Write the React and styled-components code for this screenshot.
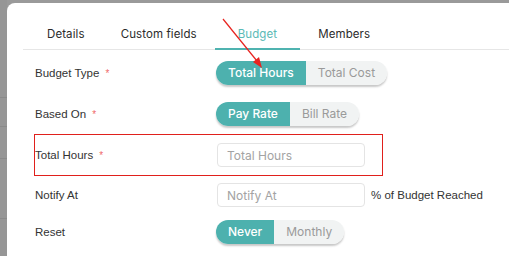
import React from 'react';
import styled, { createGlobalStyle } from 'styled-components';

const GlobalStyle = createGlobalStyle`
  html, body {
    margin: 0;
    padding: 0;
    width: 509px;
    height: 256px;
    overflow: hidden;
    background: #999;
  }
  * { box-sizing: border-box; }
`;

const tabs = ['Details', 'Custom fields', 'Budget', 'Members'];

const rows = [
  { label: 'Budget Type', required: true, h: 41, options: ['Total Hours', 'Total Cost'] },
  { label: 'Based On', required: true, h: 41, options: ['Pay Rate', 'Bill Rate'] },
  { label: 'Total Hours', required: true, h: 42, input: 'Total Hours', marked: true },
  { label: 'Notify At', h: 38, input: 'Notify At', suffix: '% of Budget Reached' },
  { label: 'Reset', h: 35, options: ['Never', 'Monthly'] },
];

const App = () => {
  return (
    <>
      <GlobalStyle />
      <Page>
        <Backdrop>
          <Stripe $top={97} />
          <Stripe $top={126} />
          <Stripe $top={158} />
          <Stripe $top={218} />
        </Backdrop>
        <Modal>
          <TabBar>
            {tabs.map((t) => (
              <Tab key={t} $active={t === 'Budget'}>
                {t}
              </Tab>
            ))}
          </TabBar>
          <Form>
            {rows.map((r) => (
              <Row key={r.label} $h={r.h} $marked={r.marked}>
                <Label>
                  {r.label}
                  {r.required && <Star>*</Star>}
                </Label>
                {r.options && (
                  <Toggle>
                    {r.options.map((o, i) => (
                      <Segment key={o} $on={i === 0}>
                        {o}
                      </Segment>
                    ))}
                  </Toggle>
                )}
                {r.input && <Input placeholder={r.input} />}
                {r.suffix && <Suffix>{r.suffix}</Suffix>}
              </Row>
            ))}
          </Form>
        </Modal>
        <Arrow width="509" height="256" viewBox="0 0 509 256">
          <line x1="223" y1="19" x2="257" y2="61" stroke="#e8231f" strokeWidth="1.2" />
          <polygon points="262,68 253,62 259,57" fill="#e8231f" />
        </Arrow>
      </Page>
    </>
  );
};

export default App;

const Page = styled.div`
  position: relative;
  width: 509px;
  height: 256px;
  padding: 3px 0 0 7px;
  background: #9a9a9a;
  overflow: hidden;
`;

const Backdrop = styled.div`
  position: absolute;
  left: 0;
  top: 0;
  width: 7px;
  height: 256px;
  background: #969696;
`;

const Stripe = styled.div`
  position: absolute;
  left: 0;
  top: ${(p) => p.$top}px;
  width: 7px;
  height: 1px;
  background: #8a8a8a;
`;

const Modal = styled.div`
  width: 540px;
  height: 280px;
  background: #fff;
  border-top-left-radius: 8px;
  padding: 15px 0 0 16px;
`;

const TabBar = styled.div`
  display: flex;
  height: 32px;
  border-bottom: 1px solid #e6e6e6;
  padding-left: 6px;
`;

const Tab = styled.div`
  display: flex;
  align-items: center;
  justify-content: center;
  padding: 2px ${(p) => (p.$active ? 23 : 18)}px 0;
  height: 32px;
  margin-bottom: -1px;
  font-family: Inter, 'Noto Sans', sans-serif;
  font-size: 11.5px;
  color: ${(p) => (p.$active ? '#5bbab6' : '#2b2b2b')};
  border-bottom: 2px solid ${(p) => (p.$active ? '#4fb3b0' : 'transparent')};
  letter-spacing: 0.1px;
`;

const Form = styled.div`
  display: flex;
  flex-direction: column;
  padding: 2px 0 0 12px;
`;

const Row = styled.div`
  display: flex;
  align-items: center;
  height: ${(p) => p.$h}px;
  width: ${(p) => (p.$marked ? '349px' : 'auto')};
  margin-left: ${(p) => (p.$marked ? '-1px' : '0')};
  border: ${(p) => (p.$marked ? '1px solid #e0201c' : 'none')};
`;

const Label = styled.div`
  width: 181px;
  font-family: 'Liberation Sans', Arial, sans-serif;
  font-size: 11.5px;
  color: #333;
`;

const Star = styled.span`
  color: #f06a6a;
  margin-left: 6px;
  font-size: 10px;
`;

const Toggle = styled.div`
  display: flex;
  height: 24px;
  border-radius: 12px;
  overflow: hidden;
  box-shadow: 0 2px 2px rgba(0, 0, 0, 0.22);
`;

const Segment = styled.div`
  display: flex;
  align-items: center;
  padding: 0 12px;
  font-family: Inter, 'Noto Sans', sans-serif;
  font-size: 12px;
  font-weight: ${(p) => (p.$on ? 500 : 400)};
  color: ${(p) => (p.$on ? '#fff' : '#9a9a9a')};
  background: ${(p) => (p.$on ? '#4db1ae' : '#f1f3f3')};
`;

const Input = styled.input`
  width: 148px;
  height: 24px;
  border: 1px solid #e4e4e4;
  border-radius: 4px;
  padding: 0 9px;
  font-family: Inter, 'Noto Sans', sans-serif;
  font-size: 12px;
  outline: none;
  margin-left: 1px;
  &::placeholder {
    color: #a3a3a3;
  }
`;

const Suffix = styled.div`
  margin-left: 6px;
  font-family: 'Liberation Sans', Arial, sans-serif;
  font-size: 11.5px;
  color: #333;
`;

const Arrow = styled.svg`
  position: absolute;
  left: 0;
  top: 0;
  pointer-events: none;
`;
